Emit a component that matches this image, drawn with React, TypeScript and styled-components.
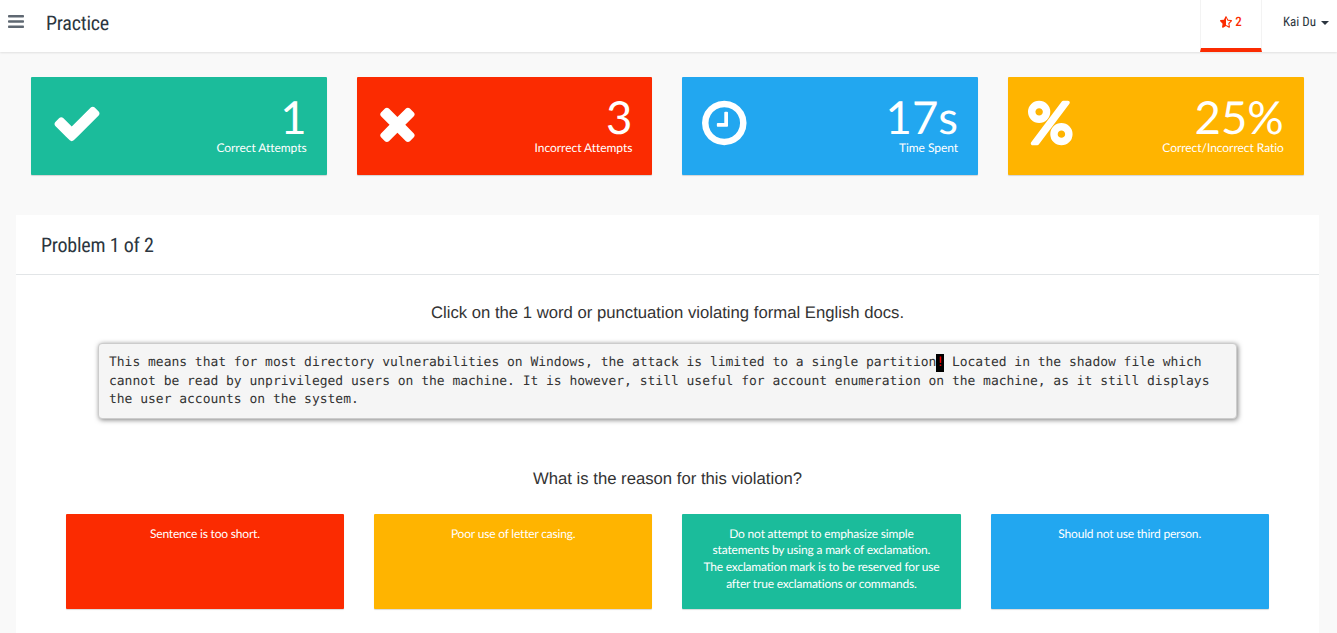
import React from 'react';
import styled, { createGlobalStyle } from 'styled-components';
import { FaStarHalfAlt } from 'react-icons/fa';

const Colors = {
  green: '#1bbc9b',
  red: '#fb2b01',
  blue: '#22a7f0',
  yellow: '#ffb400',
};

const Icons = {
  check:
    'M1671 566q0 40-28 68l-724 724-136 136q-28 28-68 28t-68-28l-136-136-362-362q-28-28-28-68t28-68l136-136q28-28 68-28t68 28l294 295 656-657q28-28 68-28t68 28l136 136q28 28 28 68z',
  times:
    'M1490 1322q0 40-28 68l-136 136q-28 28-68 28t-68-28l-294-294-294 294q-28 28-68 28t-68-28l-136-136q-28-28-28-68t28-68l294-294-294-294q-28-28-28-68t28-68l136-136q28-28 68-28t68 28l294 294 294-294q28-28 68-28t68 28l136 136q28 28 28 68t-28 68l-294 294 294 294q28 28 28 68z',
  clock:
    'M1024 544v448q0 14-9 23t-23 9h-320q-14 0-23-9t-9-23v-64q0-14 9-23t23-9h224v-352q0-14 9-23t23-9h64q14 0 23 9t9 23zm416 352q0-148-73-273t-198-198-273-73-273 73-198 198-73 273 73 273 198 198 273 73 273-73 198-198 73-273zm224 0q0 209-103 385.5t-279.5 279.5-385.5 103-385.5-103-279.5-279.5-103-385.5 103-385.5 279.5-279.5 385.5-103 385.5 103 279.5 279.5 103 385.5z',
  percent:
    'M1408 1280q0-52-38-90t-90-38-90 38-38 90 38 90 90 38 90-38 38-90zm-768-768q0-52-38-90t-90-38-90 38-38 90 38 90 90 38 90-38 38-90zm1024 768q0 159-112.5 271.5t-271.5 112.5-271.5-112.5-112.5-271.5 112.5-271.5 271.5-112.5 271.5 112.5 112.5 271.5zm-96-1088q0 20-13 38l-1056 1408q-19 26-51 26h-160q-26 0-45-19t-19-45q0-20 13-38l1056-1408q19-26 51-26h160q26 0 45 19t19 45zm-672 320q0 159-112.5 271.5t-271.5 112.5-271.5-112.5-112.5-271.5 112.5-271.5 271.5-112.5 271.5 112.5 112.5 271.5z',
};

const stats = [
  { color: Colors.green, icon: Icons.check, x: 0, width: 1792, value: '1', label: 'Correct Attempts' },
  { color: Colors.red, icon: Icons.times, x: 192, width: 1408, value: '3', label: 'Incorrect Attempts' },
  { color: Colors.blue, icon: Icons.clock, x: 128, width: 1536, value: '17s', label: 'Time Spent' },
  { color: Colors.yellow, icon: Icons.percent, x: 128, width: 1536, value: '25%', label: 'Correct/Incorrect Ratio' },
];

const answers = [
  { color: Colors.red, text: 'Sentence is too short.' },
  { color: Colors.yellow, text: 'Poor use of letter casing.' },
  {
    color: Colors.green,
    text: 'Do not attempt to emphasize simple statements by using a mark of exclamation. The exclamation mark is to be reserved for use after true exclamations or commands.',
  },
  { color: Colors.blue, text: 'Should not use third person.' },
];

const IconSize = 52;

export default function App() {
  return (
    <>
      <GlobalStyle />
      <Header>
        <MenuButton aria-label="Menu">
          <svg viewBox="0 0 16 14" width="16" height="14" fill="#5f6872">
            <rect y="0" width="16" height="2.6" rx="0.8" />
            <rect y="5.2" width="16" height="2.6" rx="0.8" />
            <rect y="10.4" width="16" height="2.6" rx="0.8" />
          </svg>
        </MenuButton>
        <Title>Practice</Title>
        <Stars>
          <FaStarHalfAlt size={12} />
          <span>2</span>
        </Stars>
        <User>
          Kai Du
          <Caret />
        </User>
      </Header>
      <Stats>
        {stats.map((stat) => (
          <Stat key={stat.label} $color={stat.color}>
            <svg
              viewBox={`${stat.x} 0 ${stat.width} 1792`}
              width={(stat.width * IconSize) / 1792}
              height={IconSize}
              fill="#fff"
            >
              <path d={stat.icon} />
            </svg>
            <StatText>
              <StatValue>{stat.value}</StatValue>
              <StatLabel>{stat.label}</StatLabel>
            </StatText>
          </Stat>
        ))}
      </Stats>
      <Panel>
        <PanelHeader>
          <Title>Problem 1 of 2</Title>
        </PanelHeader>
        <Question>Click on the 1 word or punctuation violating formal English docs.</Question>
        <Passage>
          This means that for most directory vulnerabilities on Windows, the attack is limited to a single partition
          <Marked>!</Marked> Located in the shadow file which cannot be read by unprivileged users on the machine. It is
          however, still useful for account enumeration on the machine, as it still displays the user accounts on the
          system.
        </Passage>
        <Question>What is the reason for this violation?</Question>
        <Answers>
          {answers.map((answer) => (
            <Answer key={answer.text} $color={answer.color}>
              {answer.text}
            </Answer>
          ))}
        </Answers>
      </Panel>
    </>
  );
}

const GlobalStyle = createGlobalStyle`
  * {
    box-sizing: border-box;
  }

  body {
    margin: 0;
    background: #f9f9f9;
    color: #2c3640;
    font-family: Lato, sans-serif;
    text-rendering: geometricPrecision;
  }
`;

const Header = styled.header`
  display: flex;
  align-items: flex-start;
  height: 52px;
  background: #fff;
  box-shadow: 0 1px 2px rgba(0, 0, 0, 0.1);
`;

const MenuButton = styled.button`
  display: flex;
  margin: 15px 22px 0 8px;
  padding: 0;
  border: 0;
  background: none;
`;

const Title = styled.h1`
  margin: 0;
  padding-top: 10px;
  font: 400 20px/26px 'Roboto Condensed', Roboto, sans-serif;
  font-stretch: 75%;
  letter-spacing: -0.22px;
`;

const Stars = styled.div`
  display: flex;
  justify-content: center;
  gap: 3px;
  width: 62px;
  height: 52px;
  margin-left: auto;
  padding-top: 15px;
  border: solid #f3f3f3;
  border-width: 0 1px;
  border-bottom: 4px solid ${Colors.red};
  color: ${Colors.red};
  font: 500 13px/16px 'Roboto Condensed', Roboto, sans-serif;
  font-stretch: 75%;

  svg {
    margin-top: 1px;
  }
`;

const User = styled.div`
  display: flex;
  align-items: center;
  gap: 5px;
  width: 75px;
  padding: 15px 0 0 21px;
  font: 400 13px/16px 'Roboto Condensed', Roboto, sans-serif;
  font-stretch: 75%;
`;

const Caret = styled.span`
  border: 4px solid transparent;
  border-top-color: #2c3640;
  border-bottom: 0;
`;

const Stats = styled.section`
  display: grid;
  grid-template-columns: repeat(4, 1fr);
  gap: 30px;
  padding: 25px 33.2px 0 30.8px;
`;

const Stat = styled.div<{ $color: string }>`
  display: flex;
  justify-content: space-between;
  height: 98px;
  padding: 20px 20px 0;
  border-radius: 1px;
  background: ${({ $color }) => $color};
  box-shadow: 0 1px 1px rgba(0, 0, 0, 0.15);
  color: #fff;
`;

const StatText = styled.div`
  margin-top: -8px;
  text-align: right;
`;

const StatValue = styled.div`
  font-size: 45.5px;
  line-height: 56px;
`;

const StatLabel = styled.div`
  margin-top: -5px;
  font-size: 12px;
  line-height: 16px;
  letter-spacing: -0.05px;
`;

const Panel = styled.main`
  height: 418px;
  margin: 40px 18px 0 16px;
  background: #fff;
`;

const PanelHeader = styled.div`
  height: 60px;
  padding: 7px 25px 0;
  border-bottom: 1px solid #e2e5e7;
`;

const Question = styled.p`
  margin: 0;
  padding-top: 27px;
  color: #333;
  font: 400 16.7px/22px 'Liberation Sans', sans-serif;
  text-align: center;
`;

const Passage = styled.div`
  width: 1139px;
  height: 76px;
  margin: 19px 0 22px 82px;
  padding: 10px 10px 8px;
  border: 1px solid #ccc;
  border-radius: 4px;
  background: #f5f5f5;
  box-shadow: 1px 1px 5px rgba(0, 0, 0, 0.5);
  color: #333;
  font: 400 13px/18.5px 'DejaVu Sans Mono', monospace;
  letter-spacing: -0.022px;
`;

const Marked = styled.span`
  background: #000;
  box-shadow: 0 -1px #000, 0 2px #000;
  color: #f00;
`;

const Answers = styled.div`
  display: grid;
  grid-template-columns: repeat(4, 1fr);
  gap: 30px;
  padding: 24px 50.2px 0 49.8px;
`;

const Answer = styled.div<{ $color: string }>`
  height: 95px;
  padding: 11.5px 20px 0;
  border-radius: 1px;
  background: ${({ $color }) => $color};
  box-shadow: 0 1px 1px rgba(0, 0, 0, 0.15);
  color: #fff;
  font-size: 12px;
  line-height: 16.7px;
  letter-spacing: -0.19px;
  text-align: center;
`;
